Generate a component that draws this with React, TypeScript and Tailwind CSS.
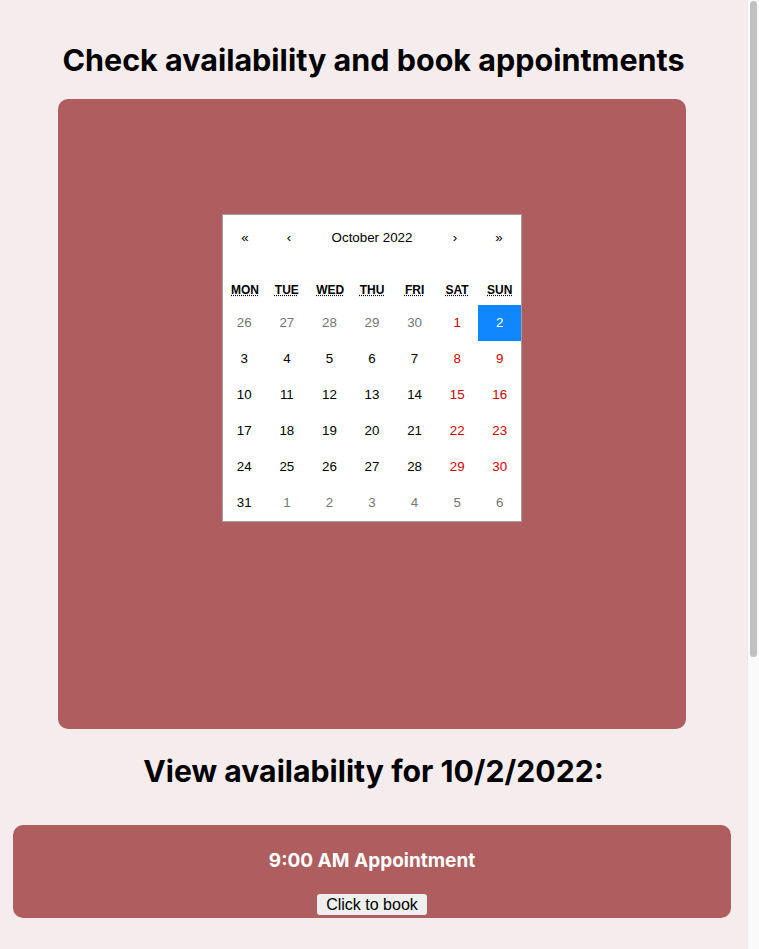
const weekdays = ['MON', 'TUE', 'WED', 'THU', 'FRI', 'SAT', 'SUN'];

type Day = { n: number; muted?: boolean; weekend?: boolean; active?: boolean };

const days: Day[] = [
  { n: 26, muted: true },
  { n: 27, muted: true },
  { n: 28, muted: true },
  { n: 29, muted: true },
  { n: 30, muted: true },
  { n: 1, weekend: true },
  { n: 2, weekend: true, active: true },
];
for (let d = 3; d <= 31; d++) {
  const col = days.length % 7;
  days.push({ n: d, weekend: col >= 5 });
}
for (let d = 1; d <= 6; d++) days.push({ n: d, muted: true });

function Calendar() {
  return (
    <div className="w-[300px] bg-white border border-[#a0a096] font-['Liberation_Sans',Arial,sans-serif] leading-[18px]">
      <div className="flex h-[44px] mb-4 pt-[2px]">
        <button className="min-w-[44px] text-[13.33px]">«</button>
        <button className="min-w-[44px] text-[13.33px]">‹</button>
        <button className="flex-1 text-[13.33px]">October 2022</button>
        <button className="min-w-[44px] text-[13.33px]">›</button>
        <button className="min-w-[44px] text-[13.33px]">»</button>
      </div>
      <div className="grid grid-cols-7 text-center text-[12px] leading-[14px] font-bold uppercase">
        {weekdays.map((w) => (
          <div key={w} className="p-2">
            <abbr className="underline decoration-dotted">{w}</abbr>
          </div>
        ))}
      </div>
      <div className="grid grid-cols-7">
        {days.map((d, i) => (
          <button
            key={i}
            className={
              'h-[36px] text-center text-[13.33px] ' +
              (d.active
                ? 'bg-[#1087ff] text-white'
                : d.muted
                  ? 'text-[#757575]'
                  : d.weekend
                    ? 'text-[#d10000]'
                    : 'text-black')
            }
          >
            {d.n}
          </button>
        ))}
      </div>
    </div>
  );
}

function Slot({ time }: { time: string }) {
  return (
    <div className="w-[718px] ml-[13px] rounded-[10px] bg-[#ae5e5e] pt-[24px] pb-[3px] flex flex-col items-center">
      <h3 className="text-[19px] leading-6 font-bold text-white">{time} Appointment</h3>
      <button className="mt-[21px] bg-[#efefef] text-black rounded-[3px] px-[9px] h-[21px] text-[16px] leading-[19px] font-['Liberation_Sans',Arial,sans-serif]">
        Click to book
      </button>
    </div>
  );
}

export default function App() {
  return (
    <div className="h-[949px] overflow-hidden flex bg-[#f5eded] font-['Inter','Noto_Sans',sans-serif]">
      <div className="w-[747px] shrink-0 pt-[42px]">
        <h1 className="text-center text-[30.5px] leading-9 font-bold text-black">
          Check availability and book appointments
        </h1>
        <div className="ml-[58px] w-[628px] mt-[21px] h-[630px] rounded-[10px] bg-[#ae5e5e] flex justify-center pt-[115px]">
          <div>
            <Calendar />
          </div>
        </div>
        <h2 className="mt-[24px] text-center text-[30.2px] leading-9 font-bold text-black">
          View availability for 10/2/2022:
        </h2>
        <div className="mt-[36px]">
          <Slot time="9:00 AM" />
        </div>
      </div>
      <div className="w-[12px] h-full bg-[#fafafa] border-l border-[#ebebeb] pl-[2px] pr-[2px] pt-[1px]">
        <div className="h-[656px] rounded-full bg-[#c1c1c1]" />
      </div>
    </div>
  );
}
